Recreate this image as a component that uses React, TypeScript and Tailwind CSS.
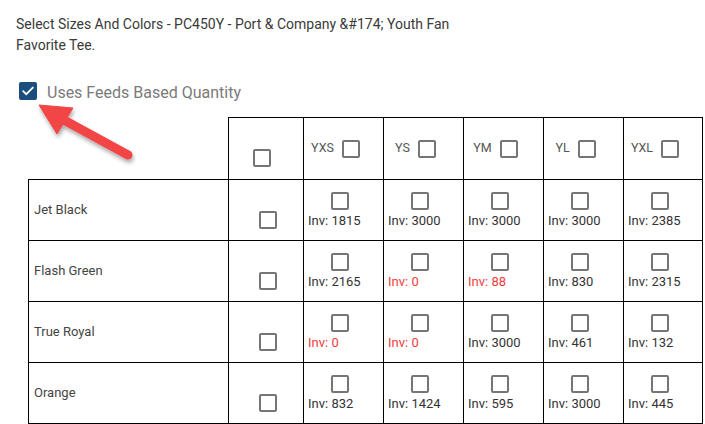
import type { FC } from "react";

const sizes = ["YXS", "YS", "YM", "YL", "YXL"];

const rows = [
  { name: "Jet Black", inv: [1815, 3000, 3000, 3000, 2385] },
  { name: "Flash Green", inv: [2165, 0, 88, 830, 2315] },
  { name: "True Royal", inv: [0, 0, 3000, 461, 132] },
  { name: "Orange", inv: [832, 1424, 595, 3000, 445] },
];

const Box: FC = () => (
  <span className="block w-[18px] h-[18px] border-2 border-[#757575] rounded-[2px] shrink-0" />
);

const Arrow: FC = () => (
  <svg
    className="absolute left-0 top-0 pointer-events-none"
    width="160"
    height="175"
    viewBox="0 0 160 175"
  >
    <defs>
      <filter id="arrowShadow" x="-20%" y="-20%" width="150%" height="150%">
        <feDropShadow dx="1" dy="3" stdDeviation="2" floodColor="#000" floodOpacity="0.35" />
      </filter>
    </defs>
    <g filter="url(#arrowShadow)" fill="#f24545" stroke="#f24545">
      <line x1="62" y1="119" x2="128" y2="155" strokeWidth="9" strokeLinecap="round" />
      <polygon points="39,105 73,108 57,134" strokeWidth="1" strokeLinejoin="round" />
    </g>
  </svg>
);

export default function App() {
  return (
    <div className="relative pl-4 pt-[14px] font-['Roboto',sans-serif] bg-white min-h-[424px]">
      <p className="w-[470px] text-[14px] leading-[21px] text-[#3a3a3a]">
        Select Sizes And Colors - PC450Y - Port &amp; Company &amp;#174; Youth Fan Favorite Tee.
      </p>

      <label className="flex items-center h-6 mt-[23px] ml-[3px]">
        <span className="flex items-center justify-center w-[18px] h-[18px] rounded-[2px] bg-[#1b4e7e]">
          <svg width="14" height="14" viewBox="0 0 24 24" fill="none">
            <path d="M4 12.5l5 5L20 6.5" stroke="#fff" strokeWidth="3.2" strokeLinecap="square" />
          </svg>
        </span>
        <span className="ml-[10px] pt-[3px] text-[16px] text-[#7a7a7a]">Uses Feeds Based Quantity</span>
      </label>

      <div className="ml-3 mt-[14px] grid grid-cols-[200px_75px_repeat(5,80px)] grid-rows-[62px_repeat(3,61px)_62px] text-[13px]">
        <div />
        <div className="border-l border-t border-black flex items-end pl-[24px] pb-[12px]">
          <Box />
        </div>
        {sizes.map((s, i) => (
          <div
            key={s}
            className={`border-l border-t border-black flex items-center justify-center gap-2 pr-4 text-[12.5px] text-[#555] ${
              i === sizes.length - 1 ? "border-r" : ""
            }`}
          >
            <span>{s}</span>
            <Box />
          </div>
        ))}

        {rows.map((r, ri) => {
          const last = ri === rows.length - 1 ? "border-b" : "";
          return [
            <div
              key={r.name}
              className={`border-l border-t border-black flex items-center pl-[5px] text-[#444] ${last}`}
            >
              {r.name}
            </div>,
            <div
              key={r.name + "-all"}
              className={`border-l border-t border-black flex items-end pl-[30px] pb-[11px] ${last}`}
            >
              <Box />
            </div>,
            ...r.inv.map((n, ci) => (
              <div
                key={r.name + ci}
                className={`border-l border-t border-black flex flex-col justify-center pl-[4px] ${last} ${
                  ci === r.inv.length - 1 ? "border-r" : ""
                }`}
              >
                <span className="ml-[23px]">
                  <Box />
                </span>
                <span className={`mt-[3px] leading-4 ${n < 100 ? "text-[#f23c3c]" : "text-[#333]"}`}>
                  Inv: {n}
                </span>
              </div>
            )),
          ];
        })}
      </div>

      <Arrow />
    </div>
  );
}
